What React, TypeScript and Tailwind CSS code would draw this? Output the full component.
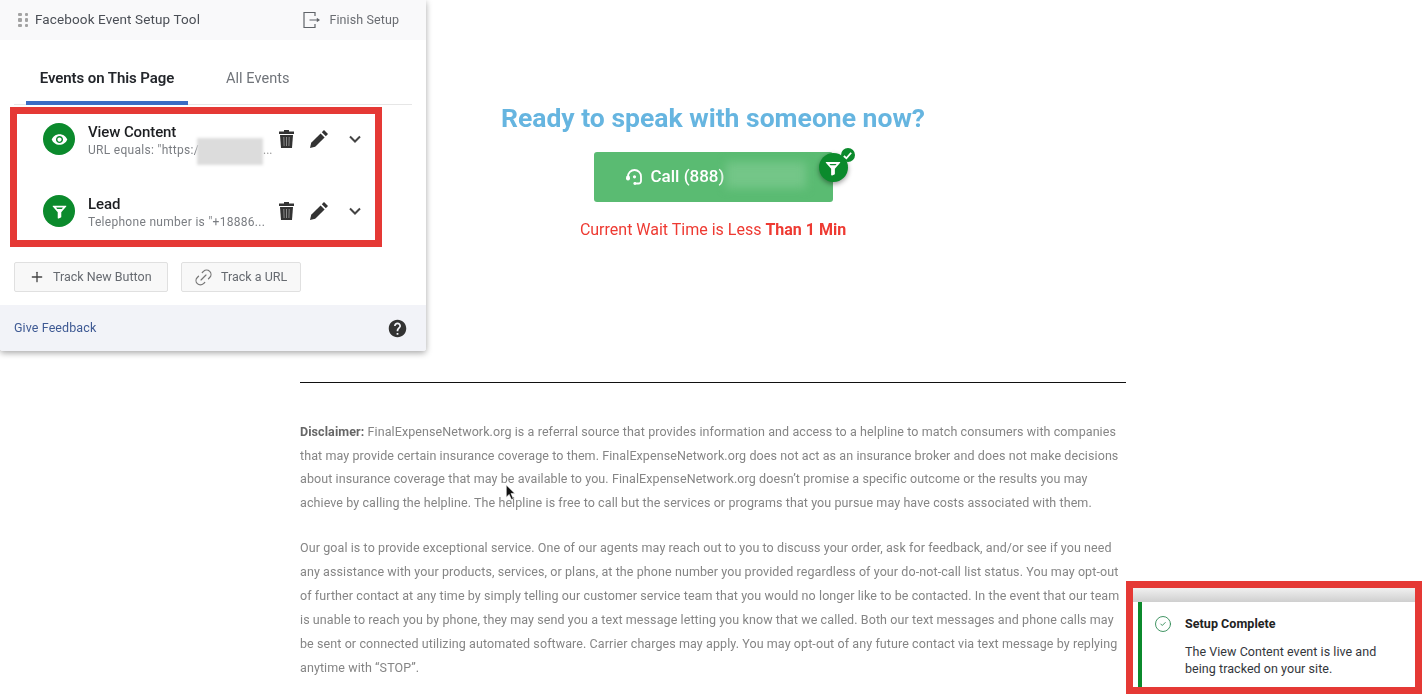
import { MdVisibility, MdHelp } from "react-icons/md";
import { Plus, Link2, CircleCheck } from "lucide-react";

function Funnel({ className }: { className?: string }) {
  return (
    <svg viewBox="0 0 24 24" className={className} fill="currentColor">
      <path d="M3 4h18c.6 0 .9.7.5 1.1L14.5 13v6.6c0 .4-.2.7-.6.9l-3 1.4c-.6.3-1.4-.1-1.4-.9V13L2.500 5.100C2.100 4.700 2.400 4 3 4z" />
      <path d="M7.200 6.500h9.600L15.300 8.300H8.700z" fill="#0b8a2c" />
    </svg>
  );
}

function Trash() {
  return (
    <svg viewBox="0 0 15 18" className="ml-[-2px] h-[18px] w-[15px]">
      <path d="M5 0h5v1.500h5V4H0V1.500h5z" fill="#333" />
      <path d="M1 5h13l-1 13H2z" fill="#333" />
      <path d="M4.800 7l.3 9M7.500 7v9M10.200 7l-.3 9" stroke="#8a8a8a" strokeWidth="1" fill="none" />
    </svg>
  );
}

function Pencil() {
  return (
    <svg viewBox="0 0 18 18" className="ml-[16px] h-[18px] w-[18px]">
      <path d="M0 18l1.200-5.200L10.600 3.400l4 4L5.200 16.800z" fill="#333" />
      <path d="M11.800 2.200 14 0l4 4-2.200 2.200z" fill="#333" />
    </svg>
  );
}

function Chevron() {
  return (
    <svg viewBox="0 0 12 8" className="ml-[21px] h-[8px] w-[12px]" fill="none" stroke="#444" strokeWidth="2">
      <path d="M1 1.500l5 5 5-5" />
    </svg>
  );
}

function EventRow({ icon, title, sub, blur }: { icon: React.ReactNode; title: string; sub: string; blur?: boolean }) {
  return (
    <div className="relative flex h-[72px] items-start pl-[43px]">
      <div className="mt-[16px] flex h-[32px] w-[32px] shrink-0 items-center justify-center rounded-full bg-[#0b8a2c] text-white">{icon}</div>
      <div className="ml-[13px] mt-[15px] w-[193px]">
        <div className="text-[15px] leading-[20px] font-medium tracking-[-0.1px] text-[#1c1e21]">{title}</div>
        <div className="whitespace-nowrap text-[12px] leading-[17px] tracking-[0.3px] text-[#7a7d82]">{sub}</div>
      </div>
      {blur && (
        <>
          <div className="absolute left-[197px] top-[31px] h-[27px] w-[66px] bg-[#dcdcdc] blur-[1.500px]" />
          <span className="absolute left-[263px] top-[35px] text-[12px] leading-[17px] text-[#9a9a9a]">...</span>
        </>
      )}
      <div className="mt-[23px] flex items-center">
        <Trash />
        <Pencil />
        <Chevron />
      </div>
    </div>
  );
}

function Panel() {
  return (
    <aside className="absolute left-0 top-0 z-10 h-[351px] w-[426px] overflow-hidden rounded-b-[3px] bg-white shadow-[0_2px_6px_rgba(0,0,0,0.35)] blur-[0.4px]">
      <header className="flex h-[40px] items-center bg-[#f9f9fa] pl-[18px] pr-[27px]">
        <div className="grid grid-cols-2 gap-x-[3px] gap-y-[2px]">
          {[0, 1, 2, 3, 4, 5].map((i) => (
            <span key={i} className="h-[3.500px] w-[3.500px] rounded-[1px] bg-[#a3a3a3]" />
          ))}
        </div>
        <span className="ml-[7px] pb-[2px] text-[13.500px] tracking-[0.12px] text-[#4b4f56]">Facebook Event Setup Tool</span>
        <div className="ml-auto flex items-center text-[#5f6368]">
          <svg viewBox="0 0 18 18" className="h-[18px] w-[18px]" fill="none" stroke="currentColor" strokeWidth="1.200">
            <path d="M13 5V1.500H2v15h11V13M7.500 9H17M14.800 7.500 17 9l-2.200 1.500" />
          </svg>
          <span className="ml-[9px] text-[12.500px] tracking-[0.1px] text-[#6a6d72]">Finish Setup</span>
        </div>
      </header>
      <nav className="mx-[14px] flex h-[65px] border-b border-[#e6e6e6]">
        <div className="ml-[12px] mt-[2px] flex h-[63px] w-[162px] items-center justify-center border-b-[4px] border-[#3b6cc4] pt-[13px] text-[15px] font-semibold tracking-[-0.08px] text-[#23262b]">Events on This Page</div>
        <div className="ml-[38px] flex items-center pt-[13px] text-[14.500px] tracking-[0.05px] text-[#70747a]">All Events</div>
      </nav>
      <div className="mt-[2px]">
        <EventRow icon={<MdVisibility className="text-[17px]" />} title="View Content" sub={'URL equals: "https:/'} blur />
        <EventRow icon={<Funnel className="h-[17px] w-[17px]" />} title="Lead" sub={'Telephone number is "+18886...'} />
      </div>
      <div className="mt-[11px] flex pl-[14px]">
        <button className="flex h-[30px] w-[154px] items-center rounded-[2px] border border-[#e0e0e0] bg-[#f8f8f8] pl-[14px] text-[12.500px] text-[#666a70]">
          <Plus size={16} strokeWidth={2} className="text-[#444]" />
          <span className="ml-[8px]">Track New Button</span>
        </button>
        <button className="ml-[13px] flex h-[30px] w-[120px] items-center rounded-[2px] border border-[#e0e0e0] bg-[#f8f8f8] pl-[11px] text-[12.500px] text-[#666a70]">
          <Link2 size={21} strokeWidth={1.400} className="-rotate-45 text-[#777]" />
          <span className="ml-[7px]">Track a URL</span>
        </button>
      </div>
      <footer className="mt-[13px] flex h-[46px] items-center justify-between bg-[#f2f3f8] pl-[14px] pr-[18px]">
        <span className="text-[12.500px] tracking-[0.1px] text-[#3f5a94]">Give Feedback</span>
        <MdHelp className="text-[21px] text-[#333]" />
      </footer>
    </aside>
  );
}

const disclaimer = [
  "FinalExpenseNetwork.org is a referral source that provides information and access to a helpline to match consumers with companies",
  "that may provide certain insurance coverage to them. FinalExpenseNetwork.org does not act as an insurance broker and does not make decisions",
  "about insurance coverage that may be available to you. FinalExpenseNetwork.org doesn’t promise a specific outcome or the results you may",
  "achieve by calling the helpline. The helpline is free to call but the services or programs that you pursue may have costs associated with them.",
];

const goal = [
  "Our goal is to provide exceptional service. One of our agents may reach out to you to discuss your order, ask for feedback, and/or see if you need",
  "any assistance with your products, services, or plans, at the phone number you provided regardless of your do-not-call list status. You may opt-out",
  "of further contact at any time by simply telling our customer service team that you would no longer like to be contacted. In the event that our team",
  "is unable to reach you by phone, they may send you a text message letting you know that we called. Both our text messages and phone calls may",
  "be sent or connected utilizing automated software. Carrier charges may apply. You may opt-out of any future contact via text message by replying",
  "anytime with “STOP”.",
];

function Main() {
  return (
    <main className="ml-[300px] w-[826px] pt-[101px] blur-[0.4px]">
      <h1 className="text-center text-[26.500px] leading-[34px] font-bold text-[#66b5e0]">Ready to speak with someone now?</h1>
      <div className="relative mx-auto mt-[17px] flex h-[50px] w-[239px] items-center rounded-[3px] bg-[#5abb72] pl-[31px] text-white">
        <svg viewBox="0 0 18 18" className="h-[18px] w-[18px]" fill="none" stroke="currentColor">
          <path d="M3 10V8.500a6.500 6.500 0 0 1 13 0V13a2.500 2.500 0 0 1-2.500 2.500H10" strokeWidth="1.800" />
          <rect x="1" y="7.500" width="4" height="5" rx="2" fill="currentColor" stroke="none" />
          <circle cx="9.500" cy="8.800" r="1.600" fill="currentColor" stroke="none" />
          <circle cx="9.800" cy="15.500" r="1.400" fill="currentColor" stroke="none" />
        </svg>
        <span className="ml-[8px] text-[17px] font-medium">Call (888)</span>
        <div className="absolute left-[132px] top-[10px] h-[26px] w-[80px] bg-[#74c688] blur-[5px]" />
        <div className="absolute right-[-15px] top-[1px] flex h-[29px] w-[29px] items-center justify-center rounded-full bg-[#0b8a2c] shadow-[0_2px_5px_rgba(0,0,0,0.4)]">
          <Funnel className="h-[18px] w-[18px] text-white" />
        </div>
        <div className="absolute right-[-22px] top-[-4px] flex h-[14px] w-[14px] items-center justify-center rounded-full bg-[#0b8a2c]">
          <svg viewBox="0 0 12 12" className="h-[11px] w-[11px]" fill="none" stroke="#fff" strokeWidth="2">
            <path d="M2 6.500l2.800 2.500L10 3" />
          </svg>
        </div>
      </div>
      <p className="mt-[17px] text-center text-[16px] leading-[22px] text-[#ee3a32]">
        Current Wait Time is Less <span className="font-bold">Than 1 Min</span>
      </p>
      <hr className="mt-[141px] border-t border-[#111]" />
      <section className="mt-[37px] whitespace-nowrap text-[12.500px] leading-[23.500px] tracking-[0.09px] text-[#858585]">
        {disclaimer.map((line, i) => (
          <div key={i}>
            {i === 0 && <b className="font-bold text-[#666]">Disclaimer: </b>}
            {line}
          </div>
        ))}
      </section>
      <section className="mt-[22px] whitespace-nowrap text-[12.500px] leading-[24px] tracking-[0.09px] text-[#858585]">
        {goal.map((line, i) => (
          <div key={i}>{line}</div>
        ))}
      </section>
    </main>
  );
}

function Toast() {
  return (
    <div className="absolute left-[1126px] top-[581px] z-10 h-[113px] w-[296px] border-[7px] border-[#e53935] bg-white">
      <div className="h-[14px] bg-gradient-to-b from-[#f1f1f1] to-[#cfcfcf]" />
      <div className="ml-[5px] flex h-[85px] border-l-[4px] border-[#0b8a2c]">
        <CircleCheck size={18} strokeWidth={1.200} className="ml-[12px] mt-[13px] text-[#2f8a55]" />
        <div className="ml-[13px] mt-[12px] text-[12.500px] tracking-[0.05px] text-[#33363b]">
          <div className="leading-[20px] font-bold text-[#222]">Setup Complete</div>
          <div className="mt-[9px] leading-[17px]">The View Content event is live and<br />being tracked on your site.</div>
        </div>
      </div>
    </div>
  );
}

export default function App() {
  return (
    <div className="relative h-[696px] w-[1422px] overflow-hidden bg-white font-['Roboto',sans-serif]">
      <Main />
      <Panel />
      <div className="absolute left-[10px] top-[107px] z-20 h-[140px] w-[372px] border-[7px] border-[#e53935]" />
      <Toast />
      <svg viewBox="0 0 12 18" className="absolute left-[505px] top-[484px] z-20 h-[17px] w-[12px]">
        <path d="M1 1v13l3-3 2.500 5.500 2-1L6 10h4z" fill="#111" stroke="#fff" strokeWidth="0.600" />
      </svg>
    </div>
  );
}
